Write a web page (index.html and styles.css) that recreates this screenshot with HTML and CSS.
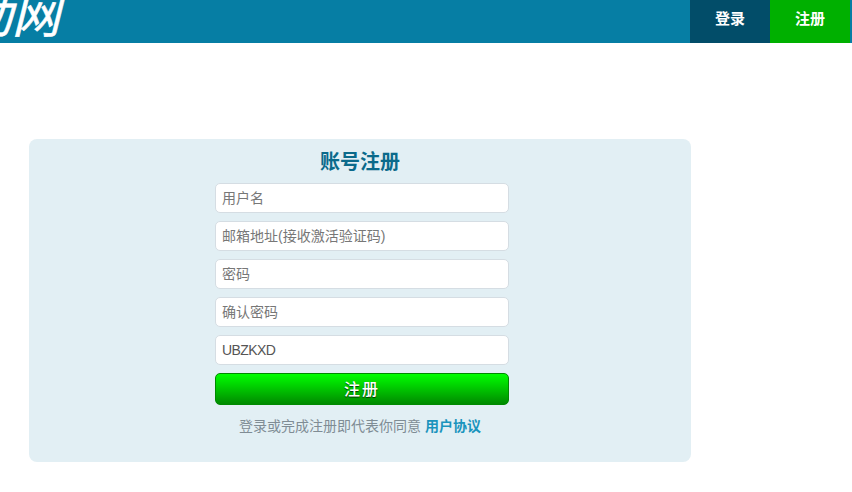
FILE: index.html
```html
<!DOCTYPE html>
<html lang="zh">
<head>
<meta charset="utf-8">
<title>账号注册</title>
<link rel="stylesheet" href="styles.css">
</head>
<body>
<header class="topbar">
  <div class="logo"><span class="logo-text">动网</span></div>
  <nav class="nav">
    <a class="nav-item nav-login" href="#">登录</a>
    <a class="nav-item nav-register" href="#">注册</a>
  </nav>
</header>
<main class="main">
  <section class="card">
    <h1 class="title">账号注册</h1>
    <form class="form">
      <input class="field" type="text" placeholder="用户名">
      <input class="field" type="text" placeholder="邮箱地址(接收激活验证码)">
      <input class="field" type="password" placeholder="密码">
      <input class="field" type="password" placeholder="确认密码">
      <input class="field field-code" type="text" value="UBZKXD">
      <button class="submit" type="button">注册</button>
    </form>
    <p class="terms">登录或完成注册即代表你同意 <a class="terms-link" href="#">用户协议</a></p>
  </section>
</main>
</body>
</html>
```
FILE: styles.css
```css
* { box-sizing: border-box; }
html, body { margin: 0; padding: 0; }
body {
  background: #fff;
  font-family: "Liberation Sans", "Noto Sans CJK SC", sans-serif;
  font-size: 14px;
  overflow: hidden;
}
.topbar {
  display: flex;
  justify-content: space-between;
  height: 43px;
  padding-right: 2px;
  background: #067ea4;
  overflow: hidden;
}
.logo { width: 120px; height: 43px; overflow: hidden; }
.logo-text {
  display: block;
  margin: -13px 0 0 -36px;
  font-size: 48px;
  line-height: 60px;
  font-style: italic;
  font-weight: 400;
  color: #fff;
  white-space: nowrap;
  -webkit-text-stroke: 0.6px #fff;
}
.nav { display: flex; }
.nav-item {
  display: flex;
  align-items: center;
  justify-content: center;
  width: 80px;
  min-height: 100%;
  color: #fff;
  font-size: 15px;
  font-weight: 700;
  text-decoration: none;
  padding-bottom: 9px;
}
.nav-login { background: #024d69; }
.nav-register { background: #00b000; }
.main { padding: 96px 0 0 29px; }
.card {
  display: flex;
  flex-direction: column;
  align-items: center;
  width: 662px;
  height: 323px;
  padding-top: 10px;
  background: #e2eff4;
  border-radius: 8px;
}
.title {
  margin: 0;
  height: 34px;
  font-size: 20px;
  line-height: 26px;
  font-weight: 700;
  color: #0b6a8b;
}
.form {
  display: flex;
  flex-direction: column;
  width: 294px;
  margin-left: 4px;
  gap: 8px;
}
.field {
  width: 100%;
  height: 30px;
  padding: 0 6px;
  border: 1px solid #d5dde3;
  border-radius: 5px;
  background: #fff;
  font-family: inherit;
  font-size: 14px;
  color: #555;
  outline: none;
}
.field-code { letter-spacing: -0.6px; }
.field::placeholder { color: #777; opacity: 1; }
.submit {
  height: 32px;
  padding: 0 0 2px;
  border: 1px solid #008a00;
  border-radius: 5px;
  background: linear-gradient(#00ff00, #008a00);
  color: #fff;
  font-family: inherit;
  font-size: 16px;
  font-weight: 500;
  letter-spacing: 2px;
  text-shadow: 0 1px 1px rgba(0, 0, 0, .7);
}
.terms {
  margin: 12px 0 0;
  font-size: 14px;
  line-height: 18px;
  color: #7f8c94;
}
.terms-link {
  color: #1a94bd;
  font-weight: 700;
  text-decoration: none;
}
```
